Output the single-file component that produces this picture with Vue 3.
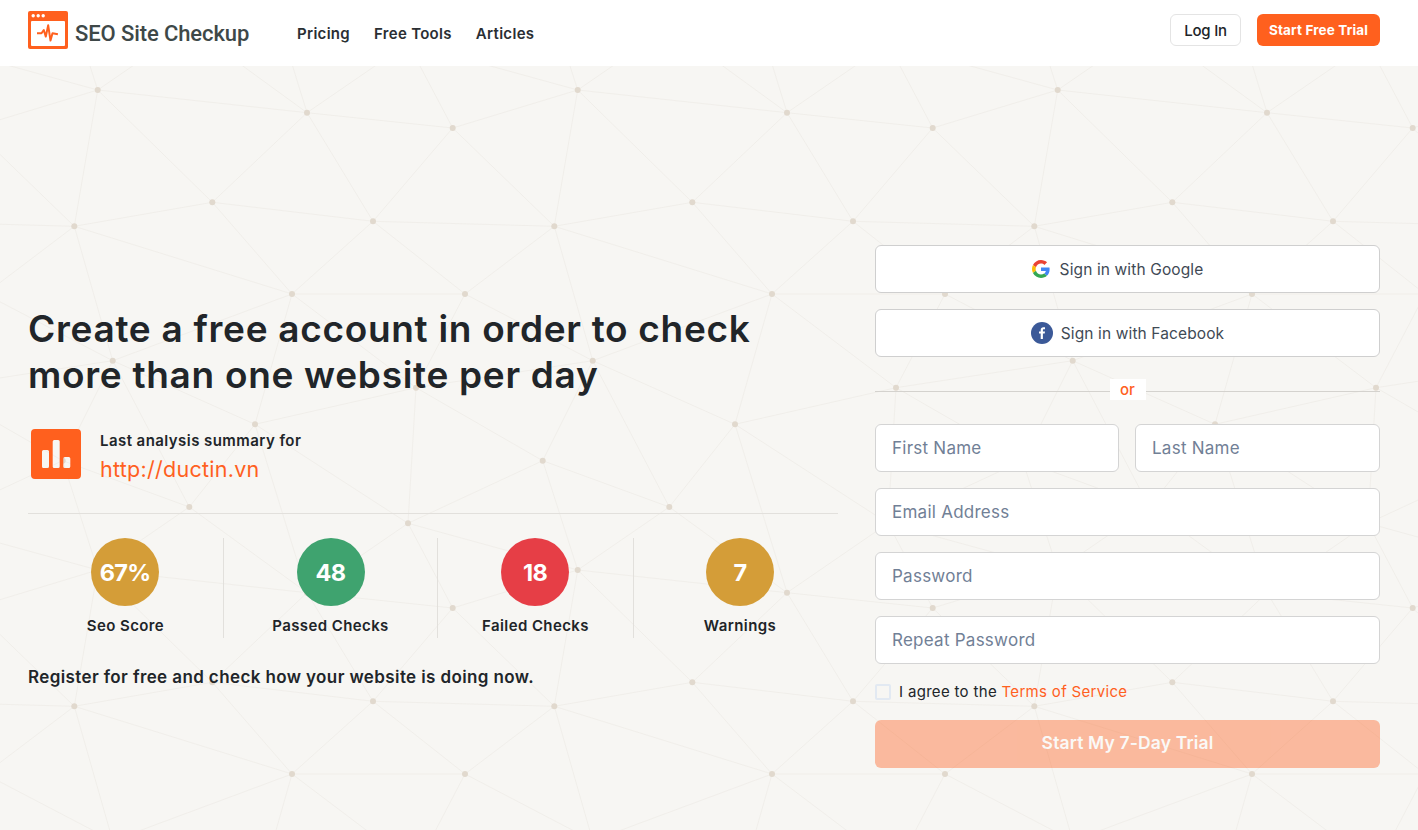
<script setup>
const T = 480
const N = {
  A: [97.7, 90], B: [307, 112.7], C: [452.7, 128], D: [212.3, 202.3], E: [373, 221.3],
  F: [74.3, 226.3], G: [292, 294], H: [465, 294], I: [112.7, 360.7], J: [416, 387.7],
  K: [255, 424.3], L: [62.7, 460.7], M: [189.3, 507], O: [408, 523.3]
}
// [from, to, tile shift x, tile shift y]
const E = [
  ['A','B'],['A','D'],['A','F'],['A','C',-1,0],['A','O',-1,-1],['A','L',0,-1],['A','M',0,-1],
  ['B','C'],['B','D'],['B','E'],['B','M',0,-1],['B','K',0,-1],['B','O',0,-1],
  ['C','E'],['C','F',1,0],['C','O',0,-1],
  ['D','E'],['D','F'],['D','G'],
  ['E','F',1,0],['E','G'],['E','H'],
  ['F','G'],['F','I'],['F','H',-1,0],
  ['G','H'],['G','I'],['G','J'],['G','K'],
  ['H','J'],['H','I',1,0],
  ['I','J',-1,0],['I','K'],['I','L'],['I','M'],
  ['J','K'],['J','O'],['J','L',1,0],
  ['K','M'],['K','O'],
  ['L','M'],['L','O',-1,0]
]
const tiles = []
for (let y = -1; y <= 1; y++) for (let x = -1; x <= 3; x++) tiles.push([x * T, y * T])
let d = ''
for (const [tx, ty] of tiles) {
  for (const [a, b, sx = 0, sy = 0] of E) {
    d += `M${N[a][0] + tx} ${N[a][1] + ty}L${N[b][0] + tx + sx * T} ${N[b][1] + ty + sy * T}`
  }
}
const meshPath = d
const dots = []
for (const [tx, ty] of tiles) for (const k in N) dots.push({ id: `${k}${tx}${ty}`, x: N[k][0] + tx, y: N[k][1] + ty })

const nav = ['Pricing', 'Free Tools', 'Articles']
const stats = [
  { value: '67%', label: 'Seo Score', tone: 'gold' },
  { value: '48', label: 'Passed Checks', tone: 'green' },
  { value: '18', label: 'Failed Checks', tone: 'red' },
  { value: '7', label: 'Warnings', tone: 'gold' }
]
</script>

<template>
  <div class="page">
    <svg class="mesh" width="1418" height="830" viewBox="0 0 1418 830" aria-hidden="true">
      <path :d="meshPath" fill="none" stroke="#efede9" stroke-width="0.9" />
      <circle v-for="p in dots" :key="p.id" :cx="p.x" :cy="p.y" r="3" fill="#e1d9ce" />
    </svg>

    <header class="topbar">
      <a class="brand">
        <svg width="40" height="38" viewBox="0 0 40 38">
          <rect width="40" height="38" rx="2" fill="#ff601e" />
          <circle cx="5.2" cy="4.7" r="1.7" fill="#fff" />
          <circle cx="10.2" cy="4.7" r="1.7" fill="#fff" />
          <circle cx="15.2" cy="4.7" r="1.7" fill="#fff" />
          <rect x="3" y="10" width="34" height="25" rx="1" fill="#fff" />
          <path d="M9 22.3h4.5l2.3-3.3 2 6.6 2.4-11.3 2.3 15.3 2-7.3 5.4 1" fill="none" stroke="#ff601e" stroke-width="2" stroke-linejoin="round" />
        </svg>
        <span class="brand-name">SEO Site Checkup</span>
      </a>
      <nav class="nav">
        <a v-for="item in nav" :key="item">{{ item }}</a>
      </nav>
      <div class="actions">
        <a class="login">Log In</a>
        <a class="trial">Start Free Trial</a>
      </div>
    </header>

    <main class="hero">
      <section class="intro">
        <h1>Create a free account in order to check more than one website per day</h1>
        <div class="summary">
          <svg class="summary-icon" width="50" height="50" viewBox="0 0 50 50">
            <path fill="#ff601e" fill-rule="evenodd" d="M4 0h42a4 4 0 0 1 4 4v42a4 4 0 0 1-4 4H4a4 4 0 0 1-4-4V4a4 4 0 0 1 4-4zM12.5 21a1.5 1.5 0 0 0-1.5 1.5v15a1.5 1.5 0 0 0 1.5 1.5h4a1.5 1.5 0 0 0 1.5-1.5v-15a1.5 1.5 0 0 0-1.5-1.5zM23.2 11a1.5 1.5 0 0 0-1.5 1.5v25a1.5 1.5 0 0 0 1.5 1.5h4a1.5 1.5 0 0 0 1.5-1.5v-25a1.5 1.5 0 0 0-1.5-1.5zM33.8 28a1.5 1.5 0 0 0-1.5 1.5v8a1.5 1.5 0 0 0 1.5 1.5h4a1.5 1.5 0 0 0 1.5-1.5v-8a1.5 1.5 0 0 0-1.5-1.5z" />
          </svg>
          <div class="summary-text">
            <div class="summary-title">Last analysis summary for</div>
            <a class="summary-url">http://ductin.vn</a>
          </div>
        </div>
        <div class="stats">
          <div v-for="s in stats" :key="s.label" class="stat">
            <div class="circle" :class="s.tone">{{ s.value }}</div>
            <div class="stat-label">{{ s.label }}</div>
          </div>
        </div>
        <p class="cta">Register for free and check how your website is doing now.</p>
      </section>

      <form class="form" @submit.prevent>
        <button type="button" class="social google">
          <svg width="18" height="18" viewBox="0 0 48 48">
            <path fill="#EA4335" d="M24 9.5c3.54 0 6.71 1.22 9.21 3.6l6.85-6.85C35.9 2.38 30.47 0 24 0 14.62 0 6.51 5.38 2.56 13.22l7.98 6.19C12.43 13.72 17.74 9.5 24 9.5z" />
            <path fill="#4285F4" d="M46.98 24.55c0-1.57-.15-3.09-.38-4.55H24v9.02h12.94c-.58 2.96-2.26 5.48-4.78 7.18l7.73 6c4.51-4.18 7.09-10.36 7.09-17.65z" />
            <path fill="#FBBC05" d="M10.53 28.59c-.48-1.45-.76-2.99-.76-4.59s.27-3.14.76-4.59l-7.98-6.19C.92 16.46 0 20.12 0 24c0 3.88.92 7.54 2.56 10.78l7.97-6.19z" />
            <path fill="#34A853" d="M24 48c6.48 0 11.93-2.13 15.89-5.81l-7.73-6c-2.15 1.45-4.92 2.3-8.16 2.3-6.26 0-11.57-4.22-13.47-9.91l-7.98 6.19C6.51 42.62 14.62 48 24 48z" />
          </svg>
          <span>Sign in with Google</span>
        </button>
        <button type="button" class="social">
          <svg width="22" height="22" viewBox="0 0 22 22">
            <circle cx="11" cy="11" r="11" fill="#3b5998" />
            <path fill="#fff" d="M11.9 17v-5.4h1.8l.3-2.1h-2.1V8.2c0-.6.2-1 1-1H14V5.3c-.2 0-.8-.1-1.6-.1-1.6 0-2.7 1-2.7 2.8v1.5H8v2.1h1.7V17z" />
          </svg>
          <span>Sign in with Facebook</span>
        </button>
        <div class="or"><span>or</span></div>
        <div class="name-row">
          <input type="text" placeholder="First Name" />
          <input type="text" placeholder="Last Name" />
        </div>
        <input type="email" placeholder="Email Address" />
        <input type="password" placeholder="Password" />
        <input type="password" placeholder="Repeat Password" />
        <label class="agree">
          <input type="checkbox" />
          <span>I agree to the <a>Terms of Service</a></span>
        </label>
        <button type="submit" class="submit">Start My 7-Day Trial</button>
      </form>
    </main>
  </div>
</template>

<style>
html, body { margin: 0; background: #f7f6f3; }
</style>

<style scoped>
.page {
  position: relative;
  min-height: 830px;
  overflow: hidden;
  background: #f7f6f3;
  font-family: Inter, "Liberation Sans", sans-serif;
  color: #202428;
}
.mesh { position: absolute; left: 0; top: 0; }
.topbar {
  position: relative;
  height: 66px;
  box-sizing: border-box;
  padding: 0 38px 0 28px;
  display: flex;
  align-items: center;
  background: #fff;
}
.brand { display: flex; align-items: center; gap: 7px; width: 269px; }
.brand svg { display: block; margin-top: -6px; }
.brand-name {
  font-family: Roboto, sans-serif;
  font-weight: 500;
  font-size: 22px;
  color: #3e4848;
  letter-spacing: -0.1px;
}
.nav { display: flex; gap: 24px; font-size: 15px; font-weight: 600; letter-spacing: 0.3px; color: #2a2e33; }
.actions { margin-left: auto; margin-top: -6px; display: flex; gap: 16px; }
.login, .trial {
  height: 32px;
  box-sizing: border-box;
  border-radius: 6px;
  display: flex;
  align-items: center;
  justify-content: center;
}
.login {
  width: 71px;
  border: 1px solid #e4e4e4;
  font-size: 15px;
  font-weight: 500;
  letter-spacing: -0.2px;
  background: #fff;
  color: #202428;
}
.trial {
  width: 123px;
  background: #ff601e;
  color: #fff;
  font-size: 13.5px;
  font-weight: 700;
  letter-spacing: 0.15px;
}
.hero {
  position: relative;
  padding: 179px 38px 0 28px;
  display: grid;
  grid-template-columns: 810px 505px;
  column-gap: 37px;
  align-items: start;
}
.intro { padding-top: 61px; }
h1 {
  margin: 0;
  font-size: 37px;
  line-height: 46px;
  font-weight: 600;
  letter-spacing: 0.7px;
  color: #212529;
  max-width: 740px;
}
.summary {
  margin-top: 31px;
  padding: 0 0 34px 3px;
  display: flex;
  gap: 19px;
  border-bottom: 1px solid #e2e0dc;
}
.summary-icon { display: block; flex: none; }
.summary-text { height: 50px; }
.summary-title { font-size: 15px; font-weight: 600; line-height: 22px; margin-top: 1px; letter-spacing: 0.44px; color: #212529; }
.summary-url { display: block; font-size: 21.5px; line-height: 30px; margin-top: 2px; color: #ff601e; letter-spacing: 0.27px; }
.stats {
  margin-top: 24px;
  display: grid;
  grid-template-columns: 196px 214px 196px 1fr;
}
.stat {
  height: 100px;
  display: flex;
  flex-direction: column;
  align-items: center;
  border-right: 1px solid #e2e0dc;
  box-sizing: border-box;
}
.stat:nth-child(odd) .circle { margin-right: 1px; }
.stat:last-child { border-right: 0; padding-left: 8px; }
.circle {
  width: 68px;
  height: 68px;
  border-radius: 50%;
  display: flex;
  align-items: center;
  justify-content: center;
  color: #fff;
  font-size: 23.5px;
  font-weight: 700;
  letter-spacing: -0.7px;
}
.gold { background: #d49d38; }
.green { background: #3fa36f; }
.red { background: #e63e46; }
.stat-label { margin-top: 10px; font-size: 15px; line-height: 20px; font-weight: 600; letter-spacing: 0.4px; }
.cta { margin: 28px 0 0; font-size: 17px; line-height: 22px; font-weight: 600; letter-spacing: 0.39px; color: #212529; }
.form { display: flex; flex-direction: column; gap: 16px; }
.social, .form input[type="text"], .form input[type="email"], .form input[type="password"], .submit {
  height: 48px;
  width: 100%;
  box-sizing: border-box;
  border-radius: 6px;
  font-family: inherit;
}
.social {
  display: flex;
  align-items: center;
  justify-content: center;
  gap: 8px;
  border: 1px solid #cfcfcf;
  background: #fff;
  color: #3f4a55;
  font-size: 15.5px;
  letter-spacing: 0.12px;
  padding: 0;
}
.google { gap: 10px; padding-right: 20px; }
.social svg { display: block; }
.or {
  position: relative;
  margin: 6px 0 8px;
  height: 21px;
  display: flex;
  justify-content: center;
}
.or::before {
  content: "";
  position: absolute;
  left: 0;
  right: 0;
  top: 12px;
  border-top: 1px solid #d4d2ce;
}
.or span {
  position: relative;
  width: 36px;
  background: #fff;
  color: #ff601e;
  font-size: 15px;
  font-weight: 500;
  line-height: 21px;
  text-align: center;
}
.name-row { display: grid; grid-template-columns: 244px 245px; column-gap: 16px; }
.form input[type="text"], .form input[type="email"], .form input[type="password"] {
  border: 1px solid #d4d4d4;
  background: #fff;
  padding: 0 16px;
  font-size: 17px;
  letter-spacing: 0.25px;
  outline: none;
}
.form input::placeholder { color: #718096; opacity: 1; }
.agree {
  margin-top: 4px;
  height: 16px;
  display: flex;
  align-items: center;
  gap: 8px;
  font-size: 15px;
  line-height: 14px;
  letter-spacing: 0.32px;
  color: #212529;
}
.agree input {
  appearance: none;
  margin: 0;
  width: 16px;
  height: 16px;
  box-sizing: border-box;
  border: 2px solid #e2e9f2;
  border-radius: 2px;
  background: transparent;
}
.agree a { color: #ff601e; }
.submit {
  margin-top: 4px;
  padding: 0 0 3px;
  border: 0;
  background: #ff601e;
  opacity: 0.4;
  color: #fff;
  font-size: 17.5px;
  font-weight: 600;
  letter-spacing: 0.15px;
}
</style>
